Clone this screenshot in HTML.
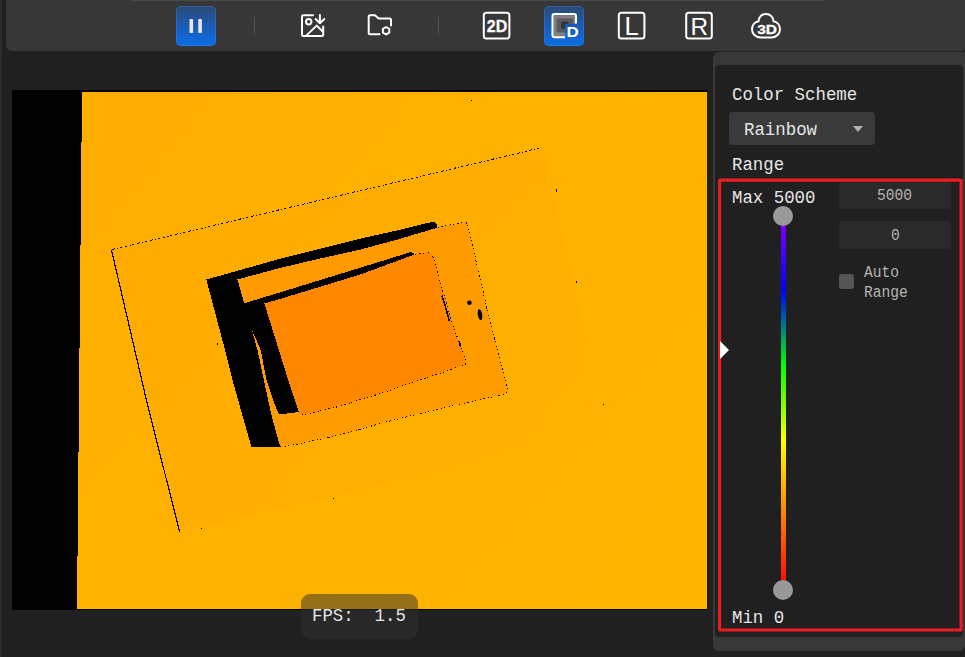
<!DOCTYPE html>
<html><head><meta charset="utf-8">
<style>
*{box-sizing:border-box;margin:0;padding:0}
html,body{width:965px;height:657px;overflow:hidden;background:#202020}
body{position:relative;font-family:"Liberation Mono","DejaVu Sans Mono",monospace;color:#e6e6e6}
.abs{position:absolute}
#leftstrip{left:0;top:0;width:2px;height:657px;background:#2c2c2c}
#toolbar{left:6px;top:0;width:959px;height:51px;background:#373737;border-radius:0 0 4px 6px}
#topline{left:131px;top:0;width:694px;height:1px;background:#4a4a4a}
.btnsel{width:40px;height:40px;top:6px;border-radius:5px;background:linear-gradient(#2b4a73 0%,#1b5bb5 50%,#0a6fe6 100%);box-shadow:inset 0 0 0 1px rgba(60,140,255,.35)}
.sep{top:17px;width:1px;height:18px;background:#525252}
#icons{left:0;top:0;width:965px;height:52px}
#img{left:12px;top:90px;width:695px;height:520px;background:#000}
#depth{left:12px;top:90px;width:695px;height:520px}
#panel{left:713px;top:52px;width:252px;height:599px;background:#383838;border-radius:6px 0 6px 6px}
#inner{left:715px;top:65px;width:248px;height:572px;background:#202020;border-radius:4px}
#red{left:718px;top:178px;width:245px;height:454px;border:3px solid #e8191f}
.t{position:absolute;white-space:pre;font-size:17.4px;line-height:20px;transform:scaleY(1.09);transform-origin:0 14.63px}
.s{position:absolute;white-space:pre;font-size:14.6px;line-height:20px;color:#b4b4b4;transform:scaleY(1.09);transform-origin:0 13.88px}
#combo{left:729px;top:112px;width:146px;height:33px;background:#3a3a3a;border-radius:4px}
#arrow{left:853px;top:126px;width:0;height:0;border-left:5.5px solid transparent;border-right:5.5px solid transparent;border-top:6px solid #b0b0b0}
.inp{left:839px;width:112px;height:28px;background:#2a2a2a;border-radius:3px}
#chk{left:839px;top:274px;width:15px;height:15px;background:#555;border-radius:3px}
#track{left:781px;top:216px;width:5px;height:374px;background:linear-gradient(#8b00ff 0%,#0000ff 20%,#00ff00 40%,#ffff00 60%,#ff7f00 80%,#ff0000 100%)}
.knob{left:773px;width:20px;height:20px;border-radius:50%;background:#999}
#tri{left:720px;top:341px;width:0;height:0;border-top:9.5px solid transparent;border-bottom:9.5px solid transparent;border-left:9px solid #fff}
#fps{left:301px;top:593.5px;width:117px;height:45.5px;background:rgba(49,49,49,.51);border-radius:9px}
</style></head><body>
<div id="leftstrip" class="abs"></div>
<div id="toolbar" class="abs"></div>
<div id="topline" class="abs"></div>
<div class="abs btnsel" style="left:176px"></div>
<div class="abs sep" style="left:254px"></div>
<div class="abs sep" style="left:438px"></div>
<div class="abs btnsel" style="left:544px"></div>
<svg id="icons" class="abs" viewBox="0 0 965 52" width="965" height="52" fill="none" stroke="#fff" stroke-width="2" stroke-linecap="round" stroke-linejoin="round">
<defs><linearGradient id="bg" gradientUnits="userSpaceOnUse" x1="0" y1="6" x2="0" y2="46"><stop offset="0" stop-color="#2b4a73"/><stop offset="0.5" stop-color="#1b5bb5"/><stop offset="1" stop-color="#0a6fe6"/></linearGradient></defs>
<!-- pause -->
<rect x="189.5" y="19" width="3.6" height="14" rx="0.8" fill="#e8e8e8" stroke="none"/>
<rect x="198.3" y="19" width="3.6" height="14" rx="0.8" fill="#e8e8e8" stroke="none"/>
<!-- image download -->
<path d="M313 15.3H303.5Q302 15.3 302 16.8V34.6Q302 36.1 303.5 36.1H321.7Q323.2 36.1 323.2 34.6V26.5"/>
<circle cx="308.7" cy="21.8" r="2.7"/>
<path d="M306.2 35.6L316.7 25.6L323 31.8"/>
<path d="M319.9 15V23M315.6 19L319.9 23.3L324.3 19"/>
<!-- folder gear -->
<path d="M379.5 34.2H370.2Q368.7 34.2 368.7 32.7V16.8Q368.7 15.3 370.2 15.3H375L378.6 18.4H389.5Q391 18.4 391 19.9V25.4"/>
<path d="M386.1 27L389.3 28.85V32.55L386.1 34.4L382.9 32.55V28.85Z"/>
<!-- 2D -->
<rect x="483.8" y="12.8" width="25.6" height="25.8" rx="2.5"/>
<!-- depth -->
<rect x="553.5" y="15.1" width="22.5" height="22.2" fill="#808080" stroke="none"/>
<rect x="556.7" y="18.4" width="16.5" height="14" fill="#595959" stroke="none"/>
<rect x="561.4" y="21.8" width="7" height="6.8" fill="#333" stroke="none"/>
<rect x="565.1" y="23.7" width="14" height="15.5" fill="url(#bg)" stroke="none"/>
<path d="M565 37.3H554.5Q552.5 37.3 552.5 35.3V16.1Q552.5 14.1 554.5 14.1H574Q576 14.1 576 16.1V23.6" stroke-linecap="butt"/>
<!-- L -->
<rect x="618.8" y="12.8" width="25.6" height="25.8" rx="2.5"/>
<!-- R -->
<rect x="686.2" y="12.8" width="25.6" height="25.8" rx="2.5"/>
<!-- cloud -->
<path d="M758.6 21.3A7.3 7.3 0 0 1 773.4 21.3C777.6 22 780 25.4 780 29.2C780 33.8 776.4 37.5 771.6 37.5H760.4C755.6 37.5 752 33.8 752 29.2C752 25.4 754.4 22 758.6 21.3Z"/>
<g stroke="none" fill="#fff" font-family="'Liberation Sans',Arial,sans-serif">
<text x="486.8" y="32.2" font-size="15.6" font-weight="bold" textLength="20.4" lengthAdjust="spacingAndGlyphs" stroke="#fff" stroke-width="0.3">2D</text>
<text x="566.6" y="36.7" font-size="14.2" font-weight="bold" textLength="12.2" lengthAdjust="spacingAndGlyphs">D</text>
<text x="624.6" y="34.8" font-size="25.6">L</text>
<text x="690.6" y="34.8" font-size="24.4">R</text>
<text x="757.2" y="33.7" font-size="13.4" font-weight="bold" textLength="19.8" lengthAdjust="spacingAndGlyphs" stroke="#fff" stroke-width="0.3">3D</text>
</g>
</svg>
<div id="img" class="abs"></div>
<svg id="depth" class="abs" viewBox="12 90 695 520" width="695" height="520" shape-rendering="crispEdges">
<defs><linearGradient id="bgg" gradientUnits="userSpaceOnUse" x1="82" y1="92" x2="707" y2="609"><stop offset="0" stop-color="#ffad00"/><stop offset="1" stop-color="#ffb500"/></linearGradient><linearGradient id="tg" x1="0" y1="0" x2="1" y2="1"><stop offset="0" stop-color="#ff9900"/><stop offset="1" stop-color="#ff9e00"/></linearGradient></defs>
<polygon points="82,92 707,92 707,609 77,609" fill="url(#bgg)"/>
<polygon points="111.5,250 542,147.5 609,432 179.6,532" fill="#ff9000" fill-opacity="0.06"/>
<!-- big outline -->
<polyline points="111.5,250 146.4,400 179.6,532" fill="none" stroke="#000" stroke-width="1.2"/>
<line x1="112" y1="249.5" x2="542" y2="147.5" stroke="#000" stroke-width="1" stroke-dasharray="3 2 1 2 2 3"/>
<!-- outer black shadow -->
<polygon points="206.3,279.5 280,258.8 320.2,248.8 360,238.7 396.9,230.5 431.6,222 435,222 437.2,224.5 437,227.8 300,300 280.8,446.8 251.5,447.2 232.4,380 225,350" fill="#000"/>
<!-- tray -->
<polygon points="237.4,279.5 280,268 320.2,258.5 360,249.7 396.9,239.7 437,227.8 464.5,222 467.5,223.5 489.6,320 507.8,389.5 507,392.5 503.3,394.3 480.7,399.6 433,410.3 385.3,422.2 337.7,435.3 283,447.2 280.8,446.8 279,443 270.7,412 257.5,350" fill="url(#tg)"/>
<polyline points="437.5,227.3 464.5,222 467.5,223.5 489.6,320 507.8,389.5 507,392.5 503.3,394.3 480.7,399.6 433,410.3 385.3,422.2 337.7,435.3 283,447.2" fill="none" stroke="#000" stroke-width="1" stroke-dasharray="1 3 2 2 1 4 1 2"/>
<!-- inner black shadow -->
<polygon points="243.4,303.5 280,292.4 360,267.8 411,252 414,253.6 414,255 360,274.6 280,299 264.4,303.5 288.2,380 299,412 279,414.5 275,405 266.5,380 260.7,350 251.3,328.5" fill="#000"/>
<!-- inner box -->
<polygon points="264.4,303.5 280,299 360,274.6 413.8,254.8 430.2,252 433,256.6 451.2,320 465.4,360.3 465.5,364.5 433,375.7 409.2,383.6 385.3,392 337.7,406.7 304.3,415 299.5,413.9 288.2,380" fill="#ff8800"/>
<polyline points="415,254.5 430.2,252 433,256.6 451.2,320 465.4,360.3 465.5,364.5 433,375.7 409.2,383.6 385.3,392 337.7,406.7 304.3,415 300.5,414.3" fill="none" stroke="#000" stroke-width="1" stroke-dasharray="1 3 2 2 1 4 1 2"/>
<!-- specks -->
<polyline points="442,295.5 445.5,307 449.3,321" fill="none" stroke="#000" stroke-width="1.6"/>
<line x1="459.4" y1="341" x2="460.5" y2="347" stroke="#000" stroke-width="1.4"/>
<circle cx="469.4" cy="302.8" r="2.3" fill="#000" shape-rendering="auto"/>
<ellipse cx="480" cy="314.7" rx="2.2" ry="5.5" transform="rotate(-10 480 314.7)" fill="#000" shape-rendering="auto"/>
<g fill="#000"><rect x="471" y="100" width="1" height="1"/><rect x="556" y="189" width="1" height="3"/><rect x="576" y="281" width="1" height="2"/><rect x="603" y="404" width="1" height="1"/><rect x="201" y="528" width="1" height="1"/><rect x="333" y="498" width="1" height="1"/><rect x="217" y="343" width="1" height="2"/></g>
</svg>
<div id="panel" class="abs"></div>
<div id="inner" class="abs"></div>
<div class="t" style="left:732px;top:85.9px">Color Scheme</div>
<div id="combo" class="abs"></div>
<div class="t" style="left:744px;top:120.8px">Rainbow</div>
<div id="arrow" class="abs"></div>
<div class="t" style="left:732px;top:156.3px">Range</div>
<div class="abs inp" style="top:181px"></div>
<div class="abs inp" style="top:221px"></div>
<div class="s" style="left:877px;top:186.2px">5000</div>
<div class="s" style="left:891px;top:226px">0</div>
<div id="chk" class="abs"></div>
<div class="s" style="left:864px;top:263px">Auto</div>
<div class="s" style="left:864px;top:283px">Range</div>
<svg class="abs" style="left:715px;top:175px" width="250" height="460" viewBox="715 175 250 460"><rect x="719.6" y="180.1" width="241.5" height="449.9" rx="1" fill="none" stroke="#ee1c23" stroke-width="3.1"/></svg>
<div class="t" style="left:732px;top:189px">Max 5000</div>
<div id="track" class="abs"></div>
<div class="abs knob" style="top:206px"></div>
<div class="abs knob" style="top:580px"></div>
<div id="tri" class="abs"></div>
<div class="t" style="left:732px;top:609.2px">Min 0</div>
<div id="fps" class="abs"></div>
<div class="t" style="left:312px;top:607.4px">FPS:  1.5</div>
</body></html>
